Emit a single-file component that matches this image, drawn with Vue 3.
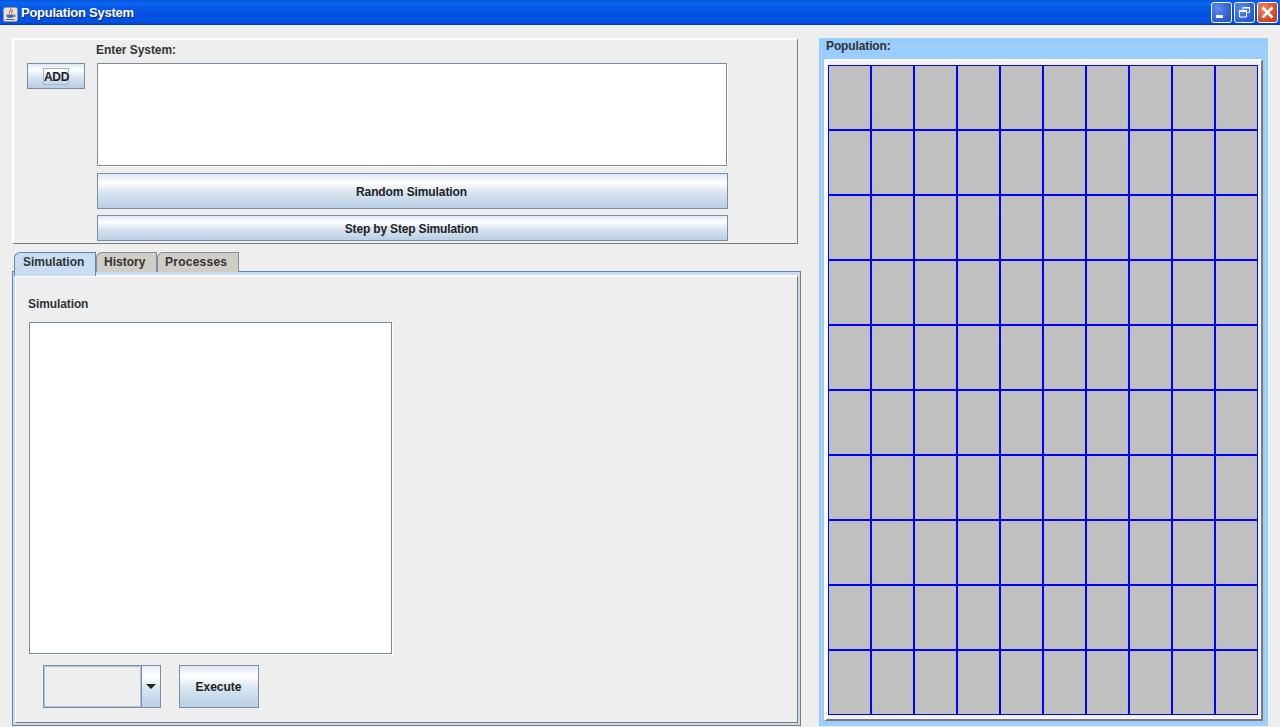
<script setup>
const cells = Array.from({ length: 100 }, (_, i) => i)
</script>

<template>
  <div class="window">
    <header class="titlebar">
      <svg class="app-icon" width="15" height="15" viewBox="0 0 15 15">
        <rect x="0.5" y="0.5" width="14" height="14" rx="2" fill="#e6e3dc" stroke="#9a968e" />
        <path d="M7.500 1.500c1 2-2 3-1 5M9.500 2.500c0 2-1 2-1 4" stroke="#e2621c" fill="none" stroke-width="1.200" />
        <path d="M3.500 7.500h7v1.500c0 1.500-1.500 2-3.500 2s-3.500-.5-3.500-2z" fill="#4c6a9c" />
        <path d="M10.500 8h1.500v1.500h-1.500" stroke="#4c6a9c" fill="none" />
        <path d="M2.500 12.500h9" stroke="#4c6a9c" />
      </svg>
      <span class="title">Population System</span>
      <div class="win-buttons">
        <button class="win-btn"><svg width="21" height="21" viewBox="0 0 21 21"><rect x="5" y="13" width="7" height="3" fill="#fff" /></svg></button>
        <button class="win-btn"><svg width="21" height="21" viewBox="0 0 21 21"><path d="M9 7.500V5.500h6.500v5h-3" fill="none" stroke="#fff" /><path d="M9 5h7v1.500H9z" fill="#fff" /><path d="M5.500 9.500h7v5.500h-7z" fill="none" stroke="#fff" /><path d="M5 8h8v1.500H5z" fill="#fff" /></svg></button>
        <button class="win-btn close"><svg width="21" height="21" viewBox="0 0 21 21"><path d="M5.500 5.500l10 10M15.500 5.500l-10 10" stroke="#fff" stroke-width="2.600" /></svg></button>
      </div>
    </header>

    <main class="content">
      <div class="left">
        <section class="system-panel">
          <div class="add-col"><button class="btn add"><span>ADD</span></button></div>
          <div class="system-col">
            <label class="lbl">Enter System:</label>
            <div class="textbox sys-box"></div>
            <button class="btn random">Random Simulation</button>
            <button class="btn step">Step by Step Simulation</button>
          </div>
        </section>

        <section class="tabs">
          <div class="tab-row">
            <div class="tab active">Simulation</div>
            <div class="tab history">History</div>
            <div class="tab processes">Processes</div>
          </div>
          <div class="tab-body">
            <div class="tab-inner">
              <div class="lbl sim-lbl">Simulation</div>
              <div class="textbox sim-box"></div>
              <div class="controls">
                <div class="combo">
                  <div class="combo-field"></div>
                  <div class="combo-arrow"><i></i></div>
                </div>
                <button class="btn exec">Execute</button>
              </div>
            </div>
          </div>
        </section>
      </div>

      <aside class="population">
        <div class="pop-legend"><span>Population:</span></div>
        <div class="pop-inner">
          <div class="grid">
            <div v-for="c in cells" :key="c" class="cell"></div>
          </div>
        </div>
      </aside>
    </main>
  </div>
</template>

<style>
html, body { margin: 0; background: #eeeeee; }
</style>

<style scoped>
.window {
  width: 1280px;
  height: 727px;
  overflow: hidden;
  background: #eeeeee;
  font-family: "Liberation Sans", Arial, sans-serif;
  font-size: 12px;
  font-weight: 700;
  color: #333333;
}
.titlebar {
  height: 25px;
  display: flex;
  align-items: center;
  box-sizing: border-box;
  padding: 0 2px 0 3px;
  background: linear-gradient(#0a52dc 0, #0a6af0 3px, #0558e8 8px, #0250de 16px, #0252e6 22px, #0240b8 25px);
}
.app-icon { margin-top: 3px; }
.title {
  margin-left: 3px;
  color: #fff;
  font-size: 13px;
  letter-spacing: -0.25px;
  text-shadow: 1px 1px 0 #0a2a80;
}
.win-buttons { margin-left: auto; display: flex; gap: 2px; margin-top: -1px; }
.win-btn {
  width: 21px;
  height: 21px;
  padding: 0;
  border: 1px solid #fff;
  border-radius: 3px;
  box-sizing: border-box;
  background: radial-gradient(circle at 30% 30%, #5c8cf0, #2a56d0 75%);
  display: block;
  overflow: hidden;
}
.win-btn svg { display: block; margin: -1px; }
.win-btn.close { background: radial-gradient(circle at 30% 30%, #ec8a64, #d0401c 75%); }

.content {
  display: flex;
  align-items: flex-start;
  padding: 13px 0 0 12px;
}
.left { width: 789px; margin-right: 18px; }

.system-panel {
  width: 786px;
  height: 206px;
  box-sizing: border-box;
  display: flex;
  background: #eeeeee;
  border-top: 2px solid #fff;
  border-left: 2px solid #fff;
  border-right: 1px solid #7a7a7a;
  border-bottom: 1px solid #7a7a7a;
}
.add-col { width: 83px; padding: 23px 0 0 13px; box-sizing: border-box; }
.lbl { display: block; line-height: 14px; letter-spacing: -0.05px; }
.system-col { width: 631px; }
.system-col .lbl { margin-top: 3px; margin-left: -1px; }
.btn {
  font: inherit;
  color: #222;
  border: 1px solid #7a8ea6;
  box-sizing: border-box;
  padding: 0;
  display: block;
  background: linear-gradient(#dde8f3 0, #ffffff 25%, #dce7f2 50%, #b8cfe5 100%);
}
.add { width: 58px; height: 26px; display: flex; align-items: center; justify-content: center; padding-top: 1px; }
.add span {
  width: 26px;
  height: 17px;
  line-height: 16px;
  border: 1px solid #a3b8cc;
  box-sizing: border-box;
  letter-spacing: -0.3px;
  text-align: center;
}
.textbox { background: #fff; border: 1px solid #7a8a99; box-sizing: border-box; box-shadow: 1px 1px 0 #fff; }
.sys-box { width: 630px; height: 103px; margin-top: 6px; }
.random { width: 631px; height: 36px; margin-top: 7px; padding: 1px 2px 0 0; letter-spacing: -0.1px; }
.step { width: 631px; height: 26px; margin-top: 6px; padding: 1px 2px 0 0; letter-spacing: -0.17px; }

.tabs { margin-top: 8px; }
.tab-row { display: flex; height: 19px; padding-left: 2px; }
.tab {
  height: 20px;
  box-sizing: border-box;
  padding-left: 7px;
  line-height: 19px;
  background: #d1cdc5;
  border: 1px solid #7a8ea6;
  border-bottom: 0;
  border-top-left-radius: 6px;
}
.history { width: 61px; }
.processes { width: 82px; letter-spacing: 0.25px; }
.tab.active {
  position: relative;
  z-index: 1;
  width: 82px;
  height: 24px;
  padding-left: 8px;
  background: #c8ddf2;
  border-color: #6382bf;
}
.tab-body {
  width: 789px;
  height: 455px;
  box-sizing: border-box;
  border: 1px solid #6382bf;
  border-right-color: #7a7a7a;
  border-bottom-color: #7a7a7a;
  background: #c8ddf2;
  padding: 3px 2px 2px 2px;
}
.tab-inner {
  height: 100%;
  box-sizing: border-box;
  background: #eeeeee;
  border-top: 2px solid #fff;
  border-left: 1px solid #fff;
  border-right: 1px solid #7a7a7a;
  border-bottom: 1px solid #7a7a7a;
  padding: 20px 0 0 13px;
}
.sim-lbl { line-height: 14px; margin-left: -1px; letter-spacing: -0.1px; }
.sim-box { width: 363px; height: 332px; margin: 11px 0 0 0; }
.controls { display: flex; margin: 11px 0 0 14px; gap: 18px; }
.combo { display: flex; width: 118px; height: 43px; border: 1px solid #7a8ea6; box-sizing: border-box; }
.combo-field { flex: 1; border: 1px solid #a9c4de; background: #eeeeee; }
.combo-arrow {
  width: 18px;
  border-left: 1px solid #7a8ea6;
  background: linear-gradient(#e4edf6 0, #ffffff 25%, #dce7f2 50%, #b8cfe5 100%);
  display: flex;
  align-items: center;
  justify-content: center;
}
.combo-arrow i {
  width: 0;
  height: 0;
  border: 5px solid transparent;
  border-top: 5px solid #222;
  border-bottom: 0;
}
.exec { width: 80px; height: 43px; padding-right: 1px; }

.population {
  width: 449px;
  height: 688px;
  box-sizing: border-box;
  background: #99ccff;
  padding: 0 5px;
  position: relative;
}
.population::before {
  content: "";
  position: absolute;
  inset: 8px 2px 1px 2px;
  border: 1px solid #aed4fb;
}
.pop-legend { position: relative; padding: 2px 0 0 0; height: 21px; box-sizing: border-box; line-height: 13px; }
.pop-legend span { background: #99ccff; display: inline-block; padding: 0 2px; letter-spacing: -0.12px; }
.pop-inner {
  position: relative;
  width: 439px;
  height: 662px;
  box-sizing: border-box;
  background: #f4f4f4;
  border-top: 2px solid #fff;
  border-left: 3px solid #fff;
  border-right: 2px solid #7a7a7a;
  border-bottom: 2px solid #7a7a7a;
  padding: 4px 0 0 1px;
}
.grid {
  display: grid;
  grid-template-columns: repeat(10, 43px);
  grid-template-rows: repeat(10, 65px);
}
.cell {
  box-sizing: border-box;
  background: #c0c0c0;
  border: 1px solid #0000ff;
}
</style>
